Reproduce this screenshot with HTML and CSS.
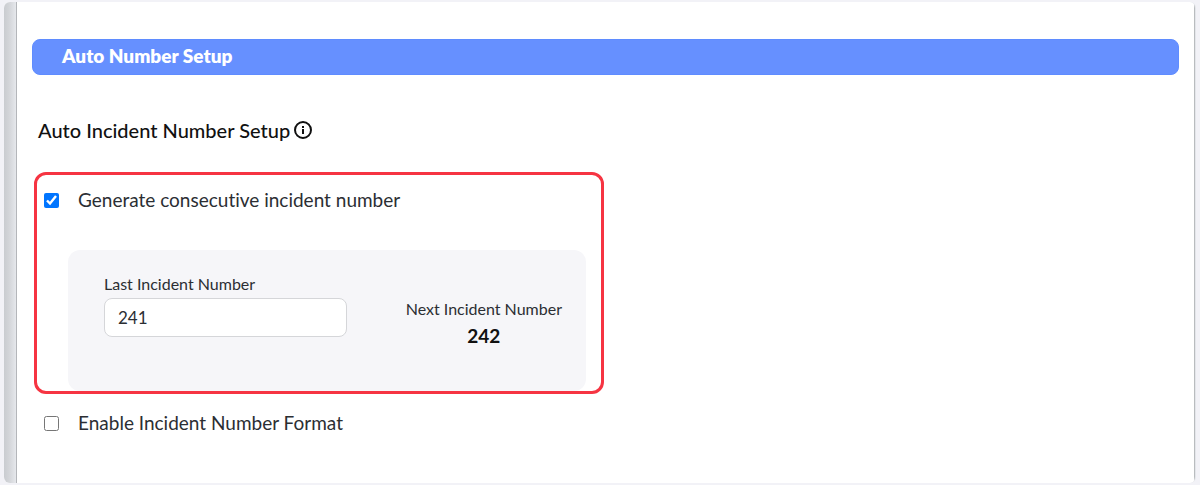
FILE: index.html
```html
<!DOCTYPE html>
<html lang="en">
<head>
    <meta charset="UTF-8">
    <meta name="viewport" content="width=device-width, initial-scale=1.0">
    <title>Auto Number Setup</title>
    <link rel="stylesheet" href="styles.css">
</head>
<body>
    <div class="window">
        <div class="side-rail"></div>
        <main class="content">
            <h1 class="section-bar">Auto Number Setup</h1>
            <h2 class="subtitle">
                Auto Incident Number Setup
                <svg class="info-icon" viewBox="0 0 18 18" role="img" aria-label="Info">
                    <circle cx="9" cy="9" r="8" fill="none" stroke="currentColor" stroke-width="2"/>
                    <path d="M9 8v5M9 5v2" fill="none" stroke="currentColor" stroke-width="2"/>
                </svg>
            </h2>
            <form>
                <div class="highlight">
                    <div class="option">
                        <input type="checkbox" id="consecutive" checked>
                        <label for="consecutive">Generate consecutive incident number</label>
                    </div>
                    <div class="number-panel">
                        <div class="field">
                            <label for="lastNumber">Last Incident Number</label>
                            <input type="text" id="lastNumber" value="241">
                        </div>
                        <div class="next-number">
                            <span>Next Incident Number</span>
                            <strong>242</strong>
                        </div>
                    </div>
                </div>
                <div class="option option-format">
                    <input type="checkbox" id="numberFormat">
                    <label for="numberFormat">Enable Incident Number Format</label>
                </div>
            </form>
        </main>
    </div>
</body>
</html>
```

FILE: styles.css
```css
* {
    box-sizing: border-box;
}

body {
    font-family: Lato, sans-serif;
    font-variant-ligatures: none;
    margin: 0;
    padding: 2px 4px;
    background-color: #f2f2f7;
    color: #2b2e33;
}

.window {
    display: flex;
    min-height: calc(100vh - 4px);
    background-color: #fff;
    border-radius: 6px;
    border-right: 1px solid #e4e6ea;
    overflow: hidden;
}

.side-rail {
    width: 13px;
    flex-shrink: 0;
    background: linear-gradient(to right, #c9ccd0, #d2d4d8 40%, #e6e8ec);
    border-right: 1px solid #b4b6ba;
}

.content {
    flex: 1;
    padding: 37px 15px 24px 15px;
    border-right: 1px solid #b9bcbf;
}

.section-bar {
    margin: 0;
    padding: 4px 29px 6px;
    border: 1px solid #5f8cff;
    border-radius: 8px;
    background-color: #6690ff;
    color: #fff;
    font-size: 19px;
    font-weight: 800;
    line-height: 24px;
}

.subtitle {
    display: flex;
    align-items: center;
    gap: 4px;
    margin: 43px 6px 30px;
    color: #111;
    font-size: 20px;
    font-weight: 500;
    line-height: 24px;
}

.info-icon {
    width: 18px;
    height: 18px;
}

.highlight {
    width: 570px;
    max-width: 100%;
    margin-left: 2px;
    padding: 13px 15px 0 7px;
    border: 3px solid #f63442;
    border-radius: 12px;
}

.option {
    display: flex;
    align-items: center;
    gap: 19px;
    font-size: 19px;
    line-height: 24px;
}

.option input {
    width: 15px;
    height: 15px;
    margin: 0;
}

.option-format {
    margin: 17px 12px 0;
}

.number-panel {
    display: flex;
    justify-content: space-between;
    margin: 38px 0 0 24px;
    padding: 24px 24px 45px 36px;
    border-radius: 12px;
    background-color: #f6f6f9;
    font-size: 16px;
    line-height: 20px;
}

.field {
    display: flex;
    flex-direction: column;
    gap: 4px;
}

.field input {
    width: 243px;
    height: 39px;
    padding: 0 13px;
    border: 1px solid #d5d6d9;
    border-radius: 8px;
    background-color: #fff;
    color: #2b2e33;
    font-family: inherit;
    font-size: 17px;
}

.next-number {
    display: flex;
    flex-direction: column;
    align-items: center;
    gap: 7px;
    padding-top: 25px;
}

.next-number strong {
    color: #111;
    font-size: 19px;
    font-weight: 700;
}
```
